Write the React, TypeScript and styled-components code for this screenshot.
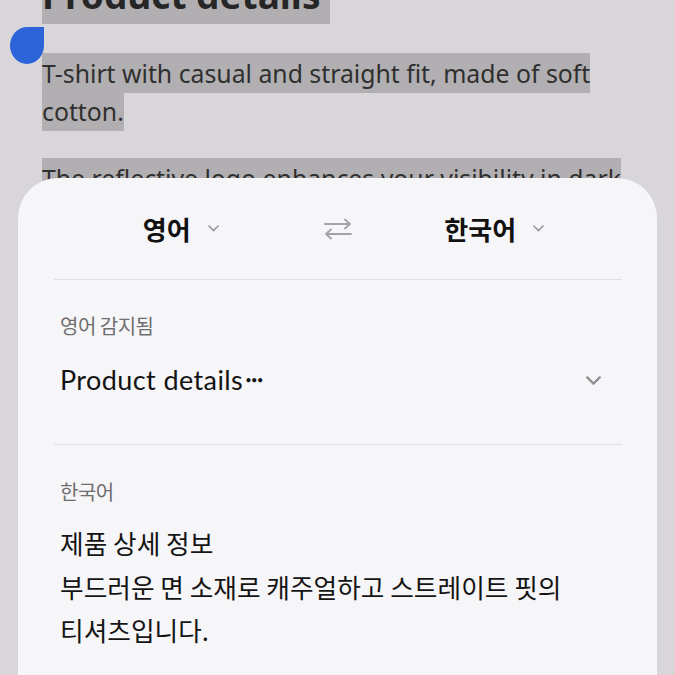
import React from "react";
import styled, { createGlobalStyle } from "styled-components";

const GlobalStyle = createGlobalStyle`
  html, body {
    margin: 0;
    padding: 0;
    background: #d9d6d9;
  }
  body {
    font-family: "Noto Sans", "Noto Sans CJK KR", sans-serif;
  }
`;

const Screen = styled.div`
  position: relative;
  width: 675px;
  height: 675px;
  overflow: hidden;
  background: #d9d6d9;
`;

const Article = styled.div`
  padding: 0 42px;
  margin-top: -27px;
  color: #2f2f2f;
`;

const Heading = styled.h1`
  margin: 0 0 37px;
  font-size: 37px;
  line-height: 44px;
  font-weight: 700;
  color: #262626;
`;

const Para = styled.p`
  margin: 0 0 29px;
  font-size: 24.8px;
  line-height: 38px;
`;

const Mark = styled.span<{ $pad?: number }>`
  background: #b2afb2;
  padding: ${(p) => p.$pad ?? 3}px 0;
  -webkit-box-decoration-break: clone;
  box-decoration-break: clone;
`;

const Handle = styled.div`
  position: absolute;
  left: 10px;
  top: 27px;
  width: 34px;
  height: 37px;
  background: #2c63d9;
  border-radius: 50% 0 50% 50%;
`;

const Sheet = styled.div`
  position: absolute;
  left: 18px;
  right: 18px;
  top: 178px;
  bottom: 0;
  background: #f6f5f7;
  border-radius: 40px 40px 0 0;
  font-family: "Noto Sans CJK KR", "Noto Sans", sans-serif;
`;

const LangBar = styled.div`
  display: grid;
  grid-template-columns: 1fr 60px 1fr;
  align-items: center;
  height: 101px;
  margin: 0 36px 0 36px;
`;

const LangPick = styled.div`
  display: flex;
  align-items: center;
  justify-content: center;
  gap: 17px;
  font-size: 26px;
  font-weight: 700;
  color: #111;
`;

const SwapBox = styled.div`
  display: flex;
  justify-content: center;
  align-items: center;
`;

const Divider = styled.div`
  height: 1px;
  margin: 0 35px 0 36px;
  background: #e2e0e3;
`;

const Section = styled.div<{ $bottom: number }>`
  padding: 0 42px ${(p) => p.$bottom}px;
`;

const Label = styled.div<{ $top: number }>`
  margin-top: ${(p) => p.$top}px;
  font-size: 20px;
  line-height: 30px;
  color: #6e6d6f;
  letter-spacing: -0.5px;
`;

const SourceRow = styled.div`
  margin-top: 23px;
  display: flex;
  align-items: center;
  justify-content: space-between;
  padding-right: 14px;
  line-height: 32px;
`;

const SourceText = styled.div`
  font-family: "Lato", "Noto Sans", sans-serif;
  font-size: 27px;
  color: #141414;
  letter-spacing: 0.4px;
`;

const Dots = styled.span`
  font-size: 11px;
  letter-spacing: -0.5px;
  vertical-align: 6px;
  margin-left: 2px;
`;

const Result = styled.div`
  margin-top: 14px;
  font-size: 25.7px;
  line-height: 43.5px;
  color: #141414;
`;

const Chevron = ({ w = 11, color = "#9b9a9c" }: { w?: number; color?: string }) => (
  <svg width={w} height={w * 0.6} viewBox="0 0 12 7" fill="none">
    <path d="M1 1 L6 6 L11 1" stroke={color} strokeWidth="1.8" strokeLinecap="round" strokeLinejoin="round" />
  </svg>
);

const SwapIcon = () => (
  <svg width="30" height="22" viewBox="0 0 30 22" fill="none" stroke="#a3a2a4" strokeWidth="1.8" strokeLinecap="round" strokeLinejoin="round">
    <path d="M2 6 H27 M22 1.5 L27 6 L22 10.5" />
    <path d="M28 16 H3 M8 11.5 L3 16 L8 20.5" />
  </svg>
);

export default function App() {
  return (
    <Screen>
      <GlobalStyle />
      <Article>
        <Heading>
          <Mark $pad={4}>Product details&nbsp;</Mark>
        </Heading>
        <Para>
          <Mark>T-shirt with casual and straight fit, made of soft cotton.</Mark>
        </Para>
        <Para>
          <Mark>The reflective logo enhances your visibility in dark environments.</Mark>
        </Para>
      </Article>
      <Handle />
      <Sheet>
        <LangBar>
          <LangPick>
            영어 <Chevron />
          </LangPick>
          <SwapBox>
            <SwapIcon />
          </SwapBox>
          <LangPick>
            한국어 <Chevron />
          </LangPick>
        </LangBar>
        <Divider />
        <Section $bottom={48}>
          <Label $top={31}>영어 감지됨</Label>
          <SourceRow>
            <SourceText>
              Product details<Dots>•••</Dots>
            </SourceText>
            <Chevron w={15} color="#8e8d8f" />
          </SourceRow>
        </Section>
        <Divider />
        <Section $bottom={0}>
          <Label $top={32}>한국어</Label>
          <Result>
            제품 상세 정보
            <br />
            부드러운 면 소재로 캐주얼하고 스트레이트 핏의
            <br />
            티셔츠입니다.
          </Result>
        </Section>
      </Sheet>
    </Screen>
  );
}
